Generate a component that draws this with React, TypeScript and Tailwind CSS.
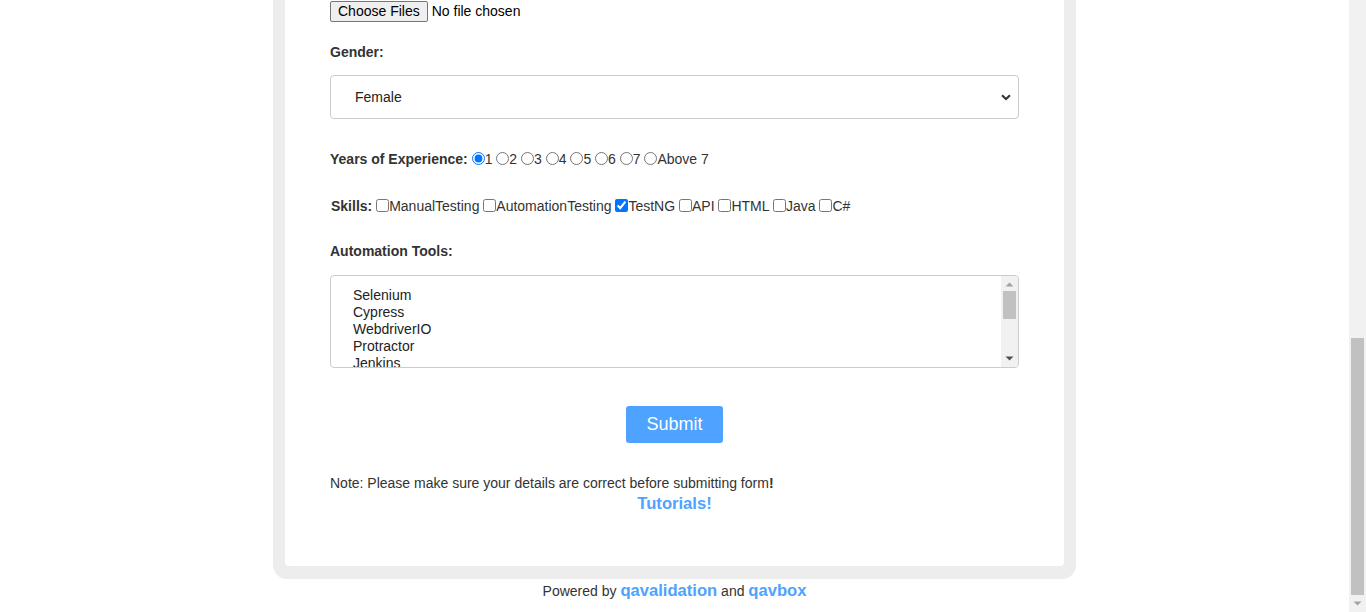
import React from "react";

const BLUE = "text-[#4da3ff]";

function Radio({ checked, label }: { checked?: boolean; label: string }) {
  return (
    <>
      <input
        type="radio"
        name="exp"
        defaultChecked={checked}
        className="ml-0 mr-0 w-[13px] h-[13px] align-[-1px]"
      />
      {label}
      {" "}
    </>
  );
}

function Check({ checked, label }: { checked?: boolean; label: string }) {
  return (
    <>
      <input
        type="checkbox"
        defaultChecked={checked}
        className="ml-0 mr-0 w-[13px] h-[13px] align-[-1px]"
      />
      {label}
      {" "}
    </>
  );
}

export default function App() {
  const tools = ["Selenium", "Cypress", "WebdriverIO", "Protractor", "Jenkins"];
  return (
    <div
      className="flex h-[612px] w-[1366px] overflow-hidden bg-white text-[#333333]"
      style={{ fontFamily: '"Liberation Sans", Arial, sans-serif' }}
    >
      <main className="flex-1 flex flex-col">
        <div className="mx-auto w-[803px] rounded-b-[14px] bg-[#ededed] px-[12px] pb-[13px]">
          <div className="rounded-b-[4px] bg-white px-[45px] pt-px pb-[53px]">
            {/* File chooser */}
            <div className="flex items-center h-[21px] text-[14px] text-black">
              <span className="h-[21px] px-[7px] flex items-center border border-[#767676] bg-[#efefef] rounded-[2px] leading-none pb-px">
                Choose Files
              </span>
              <span className="ml-[4px] leading-none pb-px">No file chosen</span>
            </div>

            {/* Gender */}
            <div className="mt-[22px] text-[14px] font-bold leading-[16px]">Gender:</div>
            <div className="mt-[15px] h-[44px] w-full flex items-center justify-between border border-[#cccccc] rounded-[4px] pl-[24px] pr-[6px] text-[14px] text-[#222]">
              <span>Female</span>
              <svg width="10" height="7" viewBox="0 0 10 7" className="mr-[1px]">
                <path d="M1 1.2 L5 5 L9 1.2" fill="none" stroke="#333" strokeWidth="2" />
              </svg>
            </div>

            {/* Years */}
            <div className="mt-[31px] h-[18px] text-[14px] leading-[18px] whitespace-nowrap">
              <b>Years of Experience:</b>{" "}
              <Radio checked label="1" />
              <Radio label="2" />
              <Radio label="3" />
              <Radio label="4" />
              <Radio label="5" />
              <Radio label="6" />
              <Radio label="7" />
              <Radio label="Above 7" />
            </div>

            {/* Skills */}
            <div className="mt-[29px] h-[18px] pl-px text-[14px] leading-[18px] whitespace-nowrap">
              <b>Skills:</b>{" "}
              <Check label="ManualTesting" />
              <Check label="AutomationTesting" />
              <Check checked label="TestNG" />
              <Check label="API" />
              <Check label="HTML" />
              <Check label="Java" />
              <Check label="C#" />
            </div>

            {/* Automation tools */}
            <div className="mt-[28px] text-[14px] font-bold leading-[16px]">Automation Tools:</div>
            <div className="mt-[16px] h-[93px] w-full flex border border-[#cccccc] rounded-[4px] overflow-hidden">
              <div className="flex-1 pl-[22px] pt-[11px] text-[14px] leading-[17px] text-[#222] overflow-hidden">
                {tools.map((t) => (
                  <div key={t}>{t}</div>
                ))}
              </div>
              <div className="w-[17px] bg-[#f1f1f1] flex flex-col items-center">
                <svg width="9" height="5" viewBox="0 0 9 5" className="mt-[6px]">
                  <path d="M0.5 4.5 L4.5 0.5 L8.5 4.5 Z" fill="#a3a3a3" />
                </svg>
                <div className="mt-[4px] w-[13px] h-[28px] bg-[#c1c1c1]" />
                <div className="flex-1" />
                <svg width="9" height="5" viewBox="0 0 9 5" className="mb-[6px]">
                  <path d="M0.5 0.5 L4.5 4.5 L8.5 0.5 Z" fill="#505050" />
                </svg>
              </div>
            </div>

            {/* Submit */}
            <div className="mt-[38px] flex justify-center">
              <button className="h-[37px] w-[97px] rounded-[3px] bg-[#4da3ff] text-white text-[18px] leading-none pb-[2px]">
                Submit
              </button>
            </div>

            {/* Note */}
            <div className="mt-[32px] text-[14px] leading-[16px]">
              Note: Please make sure your details are correct before submitting form<b>!</b>
            </div>
            <div className={`mt-[4px] text-center text-[16.6px] font-bold leading-[18px] ${BLUE}`}>
              Tutorials!
            </div>
          </div>
        </div>
        <div className="mt-[2px] text-center text-[14px] leading-[20px]">
          Powered by <b className={`text-[16.6px] ${BLUE}`}>qavalidation</b> and{" "}
          <b className={`text-[16.6px] ${BLUE}`}>qavbox</b>
        </div>
      </main>

      {/* Page scrollbar */}
      <aside className="w-[17px] h-[612px] bg-[#f1f1f1] flex flex-col items-center">
        <div className="flex-1" />
        <div className="w-[13px] h-[257px] bg-[#c1c1c1]" />
        <div className="h-[17px] flex items-center justify-center">
          <svg width="9" height="5" viewBox="0 0 9 5">
            <path d="M0.5 0.5 L4.5 4.5 L8.5 0.5 Z" fill="#a3a3a3" />
          </svg>
        </div>
      </aside>
    </div>
  );
}
